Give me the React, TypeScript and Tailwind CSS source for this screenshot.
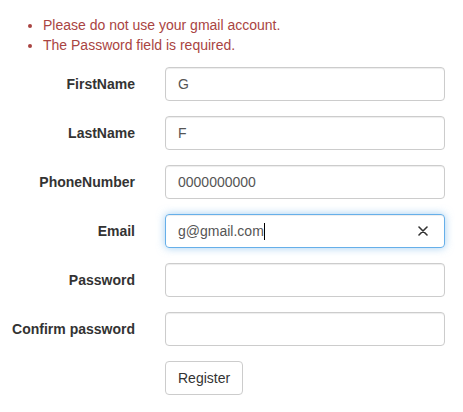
import { useState } from 'react'

// Bootstrap 3 style register form with validation summary

const FIELDS = [
  { label: 'FirstName', value: 'G' },
  { label: 'LastName', value: 'F' },
  { label: 'PhoneNumber', value: '0000000000' },
  { label: 'Email', value: 'g@gmail.com', focused: true },
  { label: 'Password', value: '' },
  { label: 'Confirm password', value: '' },
]

const ERRORS = ['Please do not use your gmail account.', 'The Password field is required.']

export default function App() {
  const [values] = useState(FIELDS)

  return (
    <div className="min-h-[412px] bg-white text-[14px] leading-[20px] text-[#333] font-['Liberation_Sans',Arial,sans-serif]">
      {/* Validation summary */}
      <ul className="list-disc pl-[43px] pt-[15px] mb-[12px] text-[#a94442]">
        {ERRORS.map((e) => (
          <li key={e}>{e}</li>
        ))}
      </ul>

      {/* Form rows */}
      {values.map((f) => (
        <div key={f.label} className="flex mb-[15px]">
          <label className="w-[150px] shrink-0 pr-[15px] pt-[7px] text-right font-bold">{f.label}</label>
          <div className="pl-[15px]">
            {f.focused ? (
              <div className="flex items-center w-[280px] h-[34px] px-[12px] rounded-[4px] border border-[#66afe9] shadow-[inset_0_1px_1px_rgba(0,0,0,0.075),0_0_8px_rgba(102,175,233,0.6)] text-[#555]">
                <span>{f.value}</span>
                <span className="w-px h-[17px] bg-black" />
                <span className="ml-auto mr-[4px] flex items-center text-[#333]">
                  <svg width="10" height="10" viewBox="0 0 10 10">
                    <path d="M1 1 L9 9 M9 1 L1 9" stroke="#333" strokeWidth="1.6" strokeLinecap="round" />
                  </svg>
                </span>
              </div>
            ) : (
              <div className="flex items-center w-[280px] h-[34px] px-[12px] rounded-[4px] border border-[#ccc] shadow-[inset_0_1px_1px_rgba(0,0,0,0.075)] text-[#555]">
                {f.value}
              </div>
            )}
          </div>
        </div>
      ))}

      {/* Submit */}
      <div className="pl-[165px]">
        <button className="h-[34px] px-[12px] rounded-[4px] border border-[#ccc] bg-white text-[#333]">
          Register
        </button>
      </div>
    </div>
  )
}
